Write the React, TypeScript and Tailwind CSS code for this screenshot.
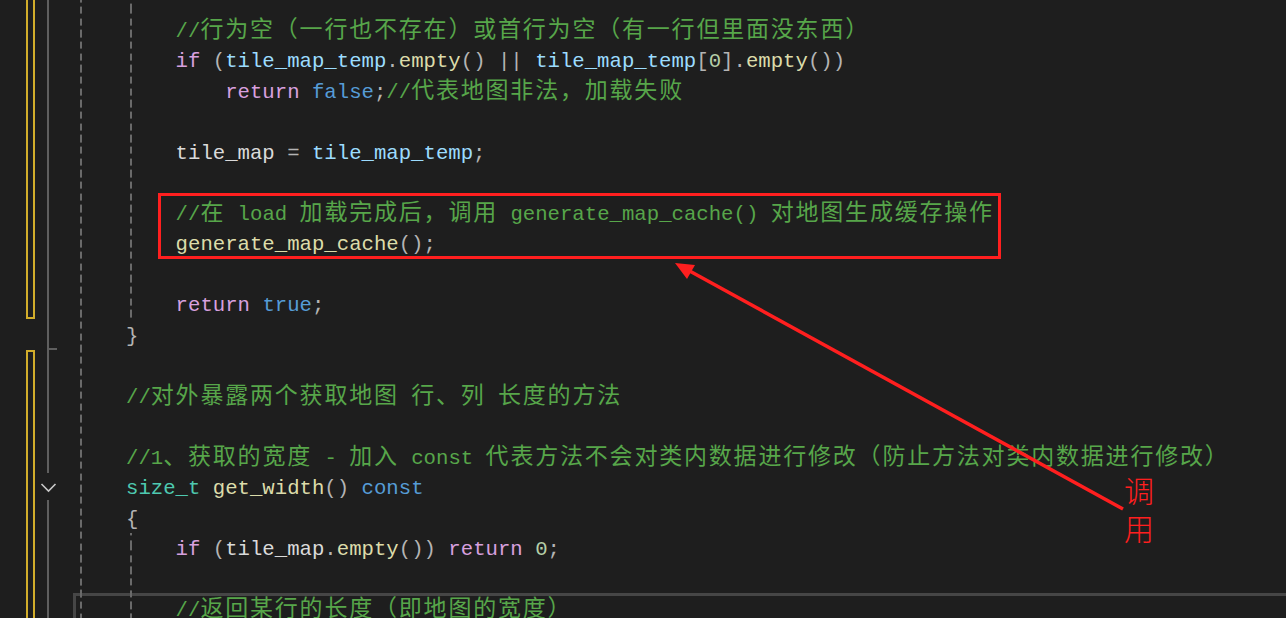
import React from "react";

type Tok = [string, keyof typeof tone];
type Line = { indent?: 2 | 3 | 4; toks?: Tok[]; current?: boolean };

const tone = {
  kw: "text-[#d8a0df]",
  bl: "text-[#569cd6]",
  fn: "text-[#dcdcaa]",
  lv: "text-[#9cdcfe]",
  mem: "text-[#dadada]",
  ty: "text-[#4ec9b0]",
  p: "text-[#b4b4b4]",
  num: "text-[#b5cea8]",
  cm: "text-[#57a64a]",
};

const indentPad = {
  2: "pl-[53px]",
  3: "pl-[102.6px]",
  4: "pl-[152.2px]",
};

const lines: Line[] = [
  { indent: 3, toks: [["//行为空（一行也不存在）或首行为空（有一行但里面没东西）", "cm"]] },
  {
    indent: 3,
    toks: [
      ["if", "kw"], [" (", "p"], ["tile_map_temp", "lv"], [".", "p"], ["empty", "fn"], ["()", "p"],
      [" || ", "p"], ["tile_map_temp", "lv"], ["[", "p"], ["0", "num"], ["]", "p"], [".", "p"],
      ["empty", "fn"], ["())", "p"],
    ],
  },
  { indent: 4, toks: [["return", "kw"], [" ", "p"], ["false", "bl"], [";", "p"], ["//代表地图非法，加载失败", "cm"]] },
  {},
  { indent: 3, toks: [["tile_map", "mem"], [" = ", "p"], ["tile_map_temp", "lv"], [";", "p"]] },
  {},
  { indent: 3, toks: [["//在 load 加载完成后，调用 generate_map_cache() 对地图生成缓存操作", "cm"]] },
  { indent: 3, toks: [["generate_map_cache", "fn"], ["();", "p"]] },
  {},
  { indent: 3, toks: [["return", "kw"], [" ", "p"], ["true", "bl"], [";", "p"]] },
  { indent: 2, toks: [["}", "p"]] },
  {},
  { indent: 2, toks: [["//对外暴露两个获取地图 行、列 长度的方法", "cm"]] },
  {},
  { indent: 2, toks: [["//1、获取的宽度 - 加入 const 代表方法不会对类内数据进行修改（防止方法对类内数据进行修改）", "cm"]] },
  { indent: 2, toks: [["size_t", "ty"], [" ", "p"], ["get_width", "fn"], ["()", "p"], [" ", "p"], ["const", "bl"]] },
  { indent: 2, toks: [["{", "p"]] },
  {
    indent: 3,
    toks: [
      ["if", "kw"], [" (", "p"], ["tile_map", "mem"], [".", "p"], ["empty", "fn"], ["())", "p"], [" ", "p"],
      ["return", "kw"], [" ", "p"], ["0", "num"], [";", "p"],
    ],
  },
  {},
  { indent: 3, toks: [["//返回某行的长度（即地图的宽度）", "cm"]], current: true },
];

// CJK glyphs take two ASCII cells, as in the editor font
function Text({ text }: { text: string }) {
  const parts = text.split(/([\u3000-\u303f\u4e00-\u9fff\uff00-\uffef]+)/);
  return (
    <>
      {parts.map((part, i) =>
        i % 2 === 1 ? (
          <span key={i} className="font-['Noto_Sans_CJK_SC',sans-serif] text-[23px] leading-[0px] tracking-[1.8px]">
            {part}
          </span>
        ) : (
          <React.Fragment key={i}>{part}</React.Fragment>
        )
      )}
    </>
  );
}

function Gutter() {
  return (
    <div className="flex w-[73px] shrink-0">
      {/* change markers */}
      <div className="ml-[26px] flex w-[9px] flex-col">
        <div className="-mt-[10px] h-[329px] border-2 border-[#d2ad2b]" />
        <div className="mt-[31px] flex-1 border-2 border-b-0 border-[#d2ad2b]" />
      </div>
      {/* outlining margin */}
      <div className="ml-[12px] flex w-[11px] flex-col">
        <div className="h-[348px] border-l-2 border-[#5f5f5f]" />
        <div className="h-[2px] w-[10px] bg-[#5f5f5f]" />
        <div className="h-[123px] border-l-2 border-[#5f5f5f]" />
        <div className="h-[27px]">
          <svg width="18" height="27" viewBox="0 0 18 27" className="-ml-[7px]">
            <polyline points="1.5,11 8.5,18 15.5,11" fill="none" stroke="#c8c8c8" strokeWidth="1.6" />
          </svg>
        </div>
        <div className="flex-1 border-l-2 border-[#5f5f5f]" />
      </div>
    </div>
  );
}

function CodeView() {
  return (
    <div className="relative flex-1 pt-[13.75px] font-['Liberation_Mono',monospace] text-[20.67px] leading-[30.5px] whitespace-pre">
      {/* indent guides */}
      <div className="absolute left-[7px] top-0 h-full w-[2px] bg-[repeating-linear-gradient(to_bottom,#6a6a6a_0_7.3px,transparent_7.3px_11.67px)] bg-position-[0_6.6px]" />
      <div className="absolute left-[57px] top-0 h-[318px] w-[2px] bg-[repeating-linear-gradient(to_bottom,#6a6a6a_0_7.3px,transparent_7.3px_11.67px)] bg-position-[0_6.6px]" />
      <div className="absolute left-[57px] top-[533px] bottom-0 w-[2px] bg-[repeating-linear-gradient(to_bottom,#6a6a6a_0_7.3px,transparent_7.3px_11.67px)] bg-position-[0_10.4px]" />
      {lines.map((line, i) => (
        <div
          key={i}
          className={`h-[30.5px] pt-[3px] ${line.indent ? indentPad[line.indent] : ""} ${
            line.current ? "shadow-[inset_3px_3px_0_0_#464646]" : ""
          }`}
        >
          {line.toks?.map(([t, c], j) => (
            <span key={j} className={tone[c]}>
              <Text text={t} />
            </span>
          ))}
        </div>
      ))}
    </div>
  );
}

export default function App() {
  return (
    <div className="relative flex h-[618px] w-[1286px] overflow-hidden bg-[#1e1e1e]">
      <Gutter />
      <CodeView />

      {/* annotation */}
      <div className="absolute left-[158px] top-[193px] h-[66px] w-[843px] border-[3px] border-[#ff1f1f]" />
      <svg className="pointer-events-none absolute inset-0" width="1286" height="618" viewBox="0 0 1286 618">
        <line x1="1123" y1="509" x2="686" y2="269" stroke="#ff1f1f" strokeWidth="3.5" />
        <polygon points="675,263 695,265 687,279" fill="#ff1f1f" />
      </svg>
      <div className="absolute left-[1124px] top-[470px] flex flex-col font-['Noto_Sans_CJK_SC',sans-serif] text-[30px] leading-[38px] font-light text-[#ff1f1f]">
        <span>调</span>
        <span>用</span>
      </div>
    </div>
  );
}
